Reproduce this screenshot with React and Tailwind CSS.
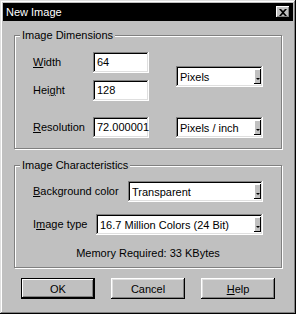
import React from "react";

const sunken =
    "shadow-[inset_-1px_-1px_#ffffff,inset_1px_1px_#808080,inset_-2px_-2px_#dfdfdf,inset_2px_2px_#000000]";

function Field({value, className}) {
    return (
        <div className={`h-[21px] bg-white pl-[4px] pt-[3px] leading-[14px] ${sunken} ${className}`}>
            {value}
        </div>
    );
}

function Combo({value, className}) {
    return (
        <div className={`flex h-[21px] items-center bg-white pl-[4px] pr-[2px] ${sunken} ${className}`}>
            <span className="flex-1 truncate leading-[14px]">{value}</span>
            <span className="flex h-[15px] w-[7px] items-end justify-center bg-[#c0c0c0] pb-[4px] shadow-[inset_-1px_-1px_#000000,inset_1px_1px_#ffffff]">
                <span className="h-0 w-0 border-x-[2px] border-t-[2px] border-x-transparent border-t-black"/>
            </span>
        </div>
    );
}

function Row({label, value}) {
    return (
        <div className="flex items-center">
            <span className="w-[60px]">{label}</span>
            <Field className="w-[56px]" value={value}/>
        </div>
    );
}

function Group({title, children, className}) {
    return (
        <fieldset
            className={`mx-[11px] border border-[#808080] shadow-[inset_1px_1px_#ffffff,1px_1px_#ffffff] ${className}`}>
            <legend className="ml-[5px] bg-[#c0c0c0] px-[2px] leading-[13px]">{title}</legend>
            {children}
        </fieldset>
    );
}

function Button({children, isDefault}) {
    return (
        <button
            className={`h-[21px] w-[74px] bg-[#c0c0c0] text-center leading-[14px] ${
                isDefault
                    ? "shadow-[inset_0_0_0_1px_#000000,inset_-2px_-2px_#000000,inset_2px_2px_#ffffff,inset_-3px_-3px_#808080]"
                    : "shadow-[inset_-1px_-1px_#000000,inset_1px_1px_#ffffff,inset_-2px_-2px_#808080,inset_2px_2px_#dfdfdf]"
            }`}
        >
            {children}
        </button>
    );
}

export default function App() {
    return (
        <div
            className="h-[314px] w-[296px] bg-[#c0c0c0] p-[3px] font-['Liberation_Sans',Arial,sans-serif] text-[11px] text-black shadow-[inset_-1px_-1px_#000000,inset_1px_1px_#dfdfdf,inset_-2px_-2px_#808080,inset_2px_2px_#ffffff]">
            {/* Title bar */}
            <div className="flex h-[18px] items-center bg-black pl-[3px] pr-[3px]">
                <span className="flex-1 text-[11px] text-white">New Image</span>
                <span
                    className="flex h-[12px] w-[14px] items-center justify-center bg-[#c0c0c0] shadow-[inset_-1px_-1px_#000000,inset_1px_1px_#ffffff,inset_-2px_-2px_#808080]">
                    <svg width="8" height="7" viewBox="0 0 8 7">
                        <path d="M0 0h2l2 2 2-2h2L5 3.5 8 7H6L4 5 2 7H0l3-3.5z" fill="#000"/>
                    </svg>
                </span>
            </div>

            {/* Image Dimensions */}
            <Group title="Image Dimensions" className="mt-[8px]">
                <div className="px-[18px] pb-[10px] pt-[10px]">
                    <div className="flex items-center">
                        <div className="flex flex-col gap-[7px]">
                            <Row label={<><span className="underline">W</span>idth</>} value="64"/>
                            <Row label={<>Hei<span className="underline">g</span>ht</>} value="128"/>
                        </div>
                        <Combo className="ml-[27px] w-[87px]" value="Pixels"/>
                    </div>
                    <div className="mt-[16px] flex items-center">
                        <Row label={<><span className="underline">R</span>esolution</>} value="72.000001"/>
                        <Combo className="ml-[27px] w-[87px]" value="Pixels / inch"/>
                    </div>
                </div>
            </Group>

            {/* Image Characteristics */}
            <Group title="Image Characteristics" className="mt-[10px]">
                <div className="px-[18px] pb-[7px] pt-[9px]">
                    <div className="flex items-center">
                        <span className="w-[95px]"><span className="underline">B</span>ackground color</span>
                        <Combo className="w-[135px]" value="Transparent"/>
                    </div>
                    <div className="mt-[12px] flex items-center">
                        <span className="w-[63px]">I<span className="underline">m</span>age type</span>
                        <Combo className="w-[167px]" value="16.7 Million Colors (24 Bit)"/>
                    </div>
                    <p className="mt-[12px] text-center leading-[13px]">Memory Required: 33 KBytes</p>
                </div>
            </Group>

            <div className="mt-[10px] flex justify-center gap-[16px]">
                <Button isDefault>OK</Button>
                <Button>Cancel</Button>
                <Button><span className="underline">H</span>elp</Button>
            </div>
        </div>
    );
}
